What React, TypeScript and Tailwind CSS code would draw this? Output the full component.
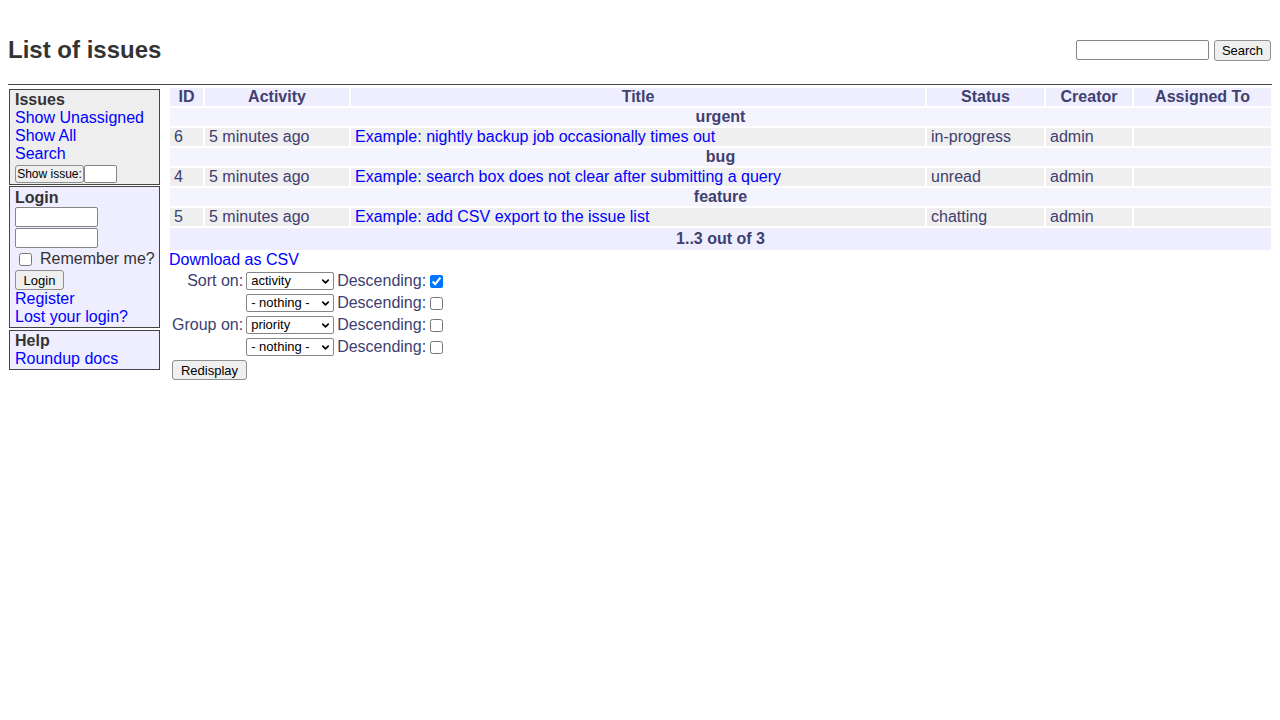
import { ChevronDown } from 'lucide-react'

type Issue = {
  id: number
  activity: string
  title: string
  status: string
  creator: string
  assignedTo: string
}

const GROUPS: { priority: string; issues: Issue[] }[] = [
  {
    priority: 'urgent',
    issues: [
      {
        id: 6,
        activity: '5 minutes ago',
        title: 'Example: nightly backup job occasionally times out',
        status: 'in-progress',
        creator: 'admin',
        assignedTo: '',
      },
    ],
  },
  {
    priority: 'bug',
    issues: [
      {
        id: 4,
        activity: '5 minutes ago',
        title: 'Example: search box does not clear after submitting a query',
        status: 'unread',
        creator: 'admin',
        assignedTo: '',
      },
    ],
  },
  {
    priority: 'feature',
    issues: [
      {
        id: 5,
        activity: '5 minutes ago',
        title: 'Example: add CSV export to the issue list',
        status: 'chatting',
        creator: 'admin',
        assignedTo: '',
      },
    ],
  },
]

const COLUMNS = [
  { label: 'ID', width: 'w-[35px]' },
  { label: 'Activity', width: 'w-[146px]' },
  { label: 'Title', width: 'w-[576px]' },
  { label: 'Status', width: 'w-[119px]' },
  { label: 'Creator', width: 'w-[88px]' },
  { label: 'Assigned To', width: 'w-[139px]' },
]

const SORT_FIELDS = ['- nothing -', 'activity', 'priority', 'status', 'creator', 'id']

// native-looking button/field chrome; font size is set per use
const btn = 'rounded-[3px] border border-[#8f8f8f] bg-[#efefef] leading-none text-black'
const field = 'rounded-[2px] border border-[#858585] bg-white'

function Select({ value }: { value: string }) {
  return (
    <span className="relative inline-block align-top">
      <select
        defaultValue={value}
        className="block h-[18px] w-[88px] appearance-none rounded-[2px] border border-[#858585] bg-white pl-[4px] text-[13px] leading-[16px] text-black"
      >
        {SORT_FIELDS.map((o) => (
          <option key={o}>{o}</option>
        ))}
      </select>
      <ChevronDown
        className="pointer-events-none absolute right-[3px] top-[4px] h-[11px] w-[11px] text-black"
        strokeWidth={3.5}
      />
    </span>
  )
}

function SortRow({ label, value, checked }: { label: string; value: string; checked?: boolean }) {
  return (
    <tr>
      <td className="p-[1px] text-right align-top">{label}</td>
      <td className="py-[1px] align-top">
        <Select value={value} />
      </td>
      <td className="whitespace-nowrap py-[1px] pl-[1px] align-top">
        Descending:
        <input type="checkbox" defaultChecked={checked} className="ml-[4px] align-[-2px]" />
      </td>
    </tr>
  )
}

function Sidebar() {
  return (
    <div className="ml-[1px] mt-[4px] flex w-[151px] shrink-0 flex-col leading-[18px]">
      <div className="border border-[#444] bg-[#eeeeee] px-[5px] pb-[1px] pt-[1px]">
        <div className="font-bold text-[#333]">Issues</div>
        <a href="#" className="block text-[#0000ff]">Show Unassigned</a>
        <a href="#" className="block text-[#0000ff]">Show All</a>
        <a href="#" className="block text-[#0000ff]">Search</a>
        <div className="mt-[2px] flex">
          <button type="button" className={`${btn} h-[18px] w-[69px] text-[12px]`}>
            Show issue:
          </button>
          <input className={`${field} h-[18px] w-[33px] text-[12px]`} />
        </div>
      </div>

      <div className="mt-[1px] border border-[#444] bg-[#eeeeff] px-[5px] pb-[1px] pt-[2px]">
        <div className="font-bold text-[#333]">Login</div>
        <input className={`${field} block h-[20px] w-[83px]`} />
        <input type="password" className={`${field} mt-[1px] block h-[20px] w-[83px]`} />
        <label className="mt-[2px] flex h-[18px] items-center whitespace-nowrap text-[#333]">
          <input type="checkbox" className="ml-[4px] mr-[8px]" />
          Remember me?
        </label>
        <button type="button" className={`${btn} mt-[2px] block h-[20px] w-[49px] text-[13px]`}>
          Login
        </button>
        <a href="#" className="block text-[#0000ff]">Register</a>
        <a href="#" className="block text-[#0000ff]">Lost your login?</a>
      </div>

      <div className="mt-[2px] border border-[#444] bg-[#eeeeff] px-[5px] pb-[1px] pt-[1px]">
        <div className="font-bold text-[#333]">Help</div>
        <a href="#" className="block text-[#0000ff]">Roundup docs</a>
      </div>
    </div>
  )
}

function IssueTable() {
  return (
    <table className="w-full table-fixed border-separate border-spacing-0 leading-[18px] text-[#404070]">
      <colgroup>
        {COLUMNS.map((c) => (
          <col key={c.label} className={c.width} />
        ))}
      </colgroup>
      <thead>
        <tr>
          {COLUMNS.map((c) => (
            <th
              key={c.label}
              className="whitespace-nowrap border border-white bg-[#eeeeff] px-1 text-center font-bold"
            >
              {c.label}
            </th>
          ))}
        </tr>
      </thead>
      <tbody>
        {GROUPS.flatMap((g) => [
          <tr key={g.priority}>
            <th colSpan={6} className="border border-white bg-[#f4f4ff] px-1 text-center font-bold">
              {g.priority}
            </th>
          </tr>,
          ...g.issues.map((i) => (
            <tr key={i.id}>
              <td className="border border-white bg-[#efefef] px-1">{i.id}</td>
              <td className="whitespace-nowrap border border-white bg-[#efefef] px-1">{i.activity}</td>
              <td className="whitespace-nowrap border border-white bg-[#efefef] px-1">
                <a href="#" className="text-[#0000ff]">{i.title}</a>
              </td>
              <td className="border border-white bg-[#efefef] px-1">{i.status}</td>
              <td className="border border-white bg-[#efefef] px-1">{i.creator}</td>
              <td className="border border-white bg-[#efefef] px-1">{i.assignedTo}</td>
            </tr>
          )),
        ])}
        <tr>
          <td colSpan={6} className="border border-white p-0">
            <div className="h-[22px] bg-[#eeeeff] text-center font-bold leading-[22px]">1..3 out of 3</div>
          </td>
        </tr>
      </tbody>
    </table>
  )
}

export default function App() {
  return (
    <div className="min-h-screen bg-white p-2 font-['Liberation_Sans',Arial,Helvetica,sans-serif] text-[16px] text-[#333]">
      <div className="flex justify-between border-b border-[#444] pb-[20px] pt-[28px]">
        <h2 className="text-[24px] font-bold leading-[28px] text-[#333]">List of issues</h2>
        <form className="mr-[1px] mt-[4px] flex items-start gap-[5px]" onSubmit={(e) => e.preventDefault()}>
          <input className={`${field} h-[20px] w-[133px]`} />
          <button type="submit" className={`${btn} h-[21px] w-[57px] text-[13px]`}>
            Search
          </button>
        </form>
      </div>

      <div className="flex gap-[9px]">
        <Sidebar />
        <div className="mt-[2px] min-w-0 flex-1">
          <IssueTable />
          <a href="#" className="block leading-[18px] text-[#0000ff]">Download as CSV</a>
          <table className="border-separate border-spacing-[2px] leading-[18px] text-[#404070]">
            <tbody>
              <SortRow label="Sort on:" value="activity" checked />
              <SortRow label="" value="- nothing -" />
              <SortRow label="Group on:" value="priority" />
              <SortRow label="" value="- nothing -" />
              <tr>
                <td colSpan={3} className="p-[1px]">
                  <button type="button" className={`${btn} h-[20px] w-[75px] text-[13px]`}>
                    Redisplay
                  </button>
                </td>
              </tr>
            </tbody>
          </table>
        </div>
      </div>
    </div>
  )
}
